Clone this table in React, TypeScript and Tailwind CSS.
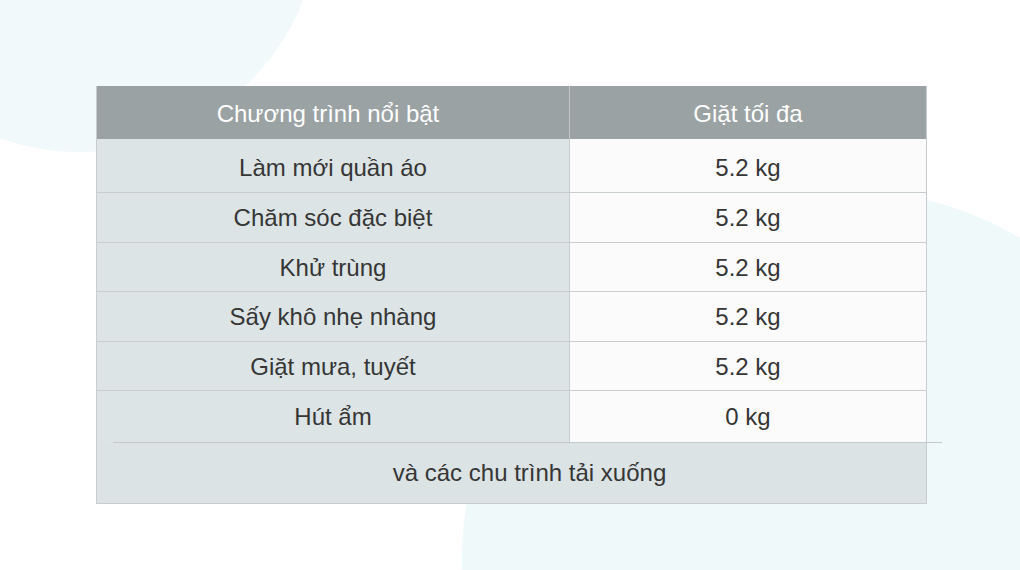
const rows = [
  { name: "Làm mới quần áo", value: "5.2 kg", h: "h-[54px]", pad: "pt-[5px]" },
  { name: "Chăm sóc đặc biệt", value: "5.2 kg", h: "h-[50px]", pad: "pt-[1px]" },
  { name: "Khử trùng", value: "5.2 kg", h: "h-[49px]", pad: "pt-[1px]" },
  { name: "Sấy khô nhẹ nhàng", value: "5.2 kg", h: "h-[50px]", pad: "pt-[1px]" },
  { name: "Giặt mưa, tuyết", value: "5.2 kg", h: "h-[49px]", pad: "pt-[1px]" },
];

export default function App() {
  return (
    <div className="relative w-[1020px] h-[570px] overflow-hidden bg-white font-['Liberation_Sans',Arial,sans-serif] text-[24px] text-[#363636]">
      {/* background blobs */}
      <div className="absolute left-[-160px] top-[-328px] w-[480px] h-[480px] rounded-full bg-[#f1f9fb]" />
      <div className="absolute left-[462px] top-[188px] w-[744px] h-[744px] rounded-full bg-[#eff9fa]" />

      <div className="relative pt-[86px] pl-[96px]">
        <div className="w-[831px] border-x border-b border-[#c8cecf]">
          {/* header */}
          <div className="flex h-[53px] bg-[#9aa2a4] text-white">
            <div className="w-[473px] flex items-center justify-center border-r border-[#bfc5c6] pt-[3px] pr-[10px]">
              Chương trình nổi bật
            </div>
            <div className="flex-1 flex items-center justify-center pt-[3px]">Giặt tối đa</div>
          </div>

          {rows.map((r) => (
            <div key={r.name} className={`flex ${r.h} border-b border-[#c8cecf]`}>
              <div className={`w-[473px] flex items-center justify-center bg-[#dce4e5] border-r border-[#c8cecf] ${r.pad}`}>
                {r.name}
              </div>
              <div className={`flex-1 flex items-center justify-center bg-[#fbfbfb] ${r.pad}`}>
                {r.value}
              </div>
            </div>
          ))}

          <div className="flex h-[51px]">
            <div className="w-[473px] flex items-center justify-center bg-[#dce4e5] border-r border-[#c8cecf] pt-[1px]">
              Hút ẩm
            </div>
            <div className="flex-1 flex items-center justify-center bg-[#fbfbfb] pt-[1px]">0 kg</div>
          </div>

          <div className="bg-[#dbe3e4]">
            <div className="h-px bg-[#c3c9ca] ml-[16px] -mr-[16px]" />
            <div className="h-[60px] flex items-center justify-center pl-[36px]">
              và các chu trình tải xuống
            </div>
          </div>
        </div>
      </div>
    </div>
  );
}
